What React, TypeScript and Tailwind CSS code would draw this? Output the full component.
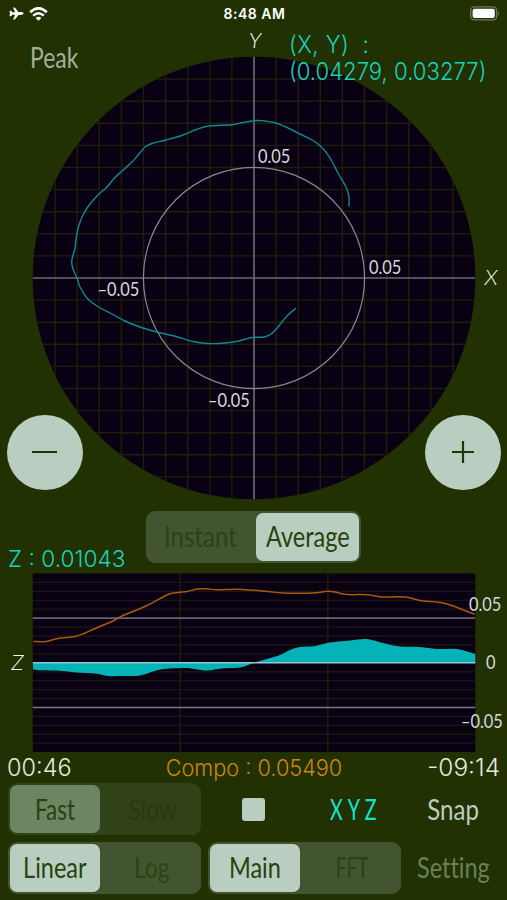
import React from "react";
import { IoAirplane } from "react-icons/io5";

type Point = [number, number];

const grid = Array.from({ length: 19 }, (_, i) => (i - 9) * 22.1);
const rows = Array.from({ length: 19 }, (_, i) => (i + 1) * 8.93);

const orbit: Point[] = [
  [349, 206], [349, 197], [346.5, 188], [338, 173], [330, 158], [322, 147.5], [313, 140.5],
  [301, 134.5], [288, 128], [276, 123], [265, 121], [256, 120.5], [243, 122.5], [232, 124.7],
  [209, 126], [196, 129.5], [183, 135], [166, 140], [152, 143.5], [145, 147], [139, 154],
  [132, 162], [122, 171], [114, 178.5], [107, 187], [98, 195], [90, 204], [84, 213], [79, 225],
  [76.5, 236], [75, 248.5], [73, 255], [71.7, 262], [73, 269], [77, 278], [80, 287], [87, 298],
  [97, 306], [110, 313], [125, 321], [140, 327], [157, 332], [176, 336.5], [193, 341.5],
  [207, 343.5], [225, 343], [239, 341], [252, 337.5], [264, 337], [271, 334], [278, 327],
  [287, 316], [295.5, 308.5],
];

const compo: Point[] = [
  [34, 641.5], [46, 641.5], [58, 638.5], [75, 636.5], [85, 633], [94, 629], [113, 621],
  [123, 615.5], [146, 606], [168, 594.5], [178, 592.5], [187, 591.5], [197, 589], [207, 588.7],
  [217, 589.7], [237, 589.2], [250, 590], [268, 591.5], [283, 593], [312, 593], [327, 591.3],
  [335, 592], [347, 594.5], [368, 594.7], [381, 597], [405, 597], [420, 600.5], [443, 603],
  [457, 607.5], [474, 614],
];

const zWave: Point[] = [
  [33, 669.5], [40, 670.3], [62, 671], [77, 672.5], [95, 673.5], [108, 676], [123, 676],
  [136, 676], [144, 674.5], [158, 670], [170, 668.5], [187, 668], [197, 669.5], [208, 670.5],
  [222, 668.5], [240, 667.5], [248, 665], [254, 662.7], [265, 659.5], [280, 655], [290, 650],
  [300, 647], [315, 646], [330, 642.5], [350, 640.5], [364, 639], [372, 640], [387, 644],
  [400, 646.5], [420, 647], [437, 649], [457, 649], [475.3, 654],
];

// Catmull-Rom through the samples
const smooth = (pts: Point[]) =>
  pts.reduce((d, [x, y], i) => {
    if (i === 0) return `M${x} ${y}`;
    const a = pts[Math.max(i - 2, 0)];
    const b = pts[i - 1];
    const c = pts[Math.min(i + 1, pts.length - 1)];
    return `${d}C${b[0] + (x - a[0]) / 6} ${b[1] + (y - a[1]) / 6} ${x - (c[0] - b[0]) / 6} ${
      y - (c[1] - b[1]) / 6
    } ${x} ${y}`;
  }, "");

interface LabelProps {
  x: number;
  y: number;
  children: string;
}

const Tick = ({ x, y, children }: LabelProps) => (
  <text
    transform={`translate(${x} ${y}) scale(0.82 1)`}
    className="fill-[#d9d8dd] font-['Lato',sans-serif] text-[20px]"
  >
    {children}
  </text>
);

const Axis = ({ x, y, children }: LabelProps) => (
  <text
    x={x}
    y={y}
    textAnchor="middle"
    className="fill-[#f0f5ee] font-['Lato',sans-serif] text-[22.5px] font-light italic"
  >
    {children}
  </text>
);

const StatusBar = () => (
  <header className="flex h-[27px] items-center justify-between pr-[7px] pl-[9px] text-white">
    <div className="flex w-[60px] items-center gap-[5px]">
      <IoAirplane size={15} />
      <svg width="19" height="14" viewBox="0 0 19 14" fill="none" stroke="currentColor">
        <path d="M1.2 5.2Q9.5 -2.4 17.8 5.2" strokeWidth="2.7" />
        <path d="M4.2 8.6Q9.5 3.8 14.8 8.6" strokeWidth="2.5" />
        <path d="M6.6 10.9Q9.5 8.4 12.4 10.9L9.5 13.8Z" fill="currentColor" stroke="none" />
      </svg>
    </div>
    <span className="font-['Inter',sans-serif] text-[14px] font-semibold tracking-[0.5px]">
      8:48 AM
    </span>
    <div className="flex w-[60px] justify-end">
      <svg width="30" height="15" viewBox="0 0 30 15">
        <rect x="0.7" y="0.9" width="26" height="13" rx="3.6" fill="none" stroke="#6f7a58" strokeWidth="1.3" />
        <rect x="2.6" y="2.8" width="22.2" height="9.2" rx="2" fill="#fff" />
        <path d="M28 5q2 2.4 0 4.8Z" fill="#6f7a58" />
      </svg>
    </div>
  </header>
);

const OrbitPlot = () => (
  <section className="relative h-[484px]">
    <svg width="507" height="484" viewBox="0 27 507 484" className="block">
      <defs>
        <clipPath id="disc">
          <circle cx="254" cy="278" r="221.3" />
        </clipPath>
      </defs>
      <g clipPath="url(#disc)">
        <rect x="32" y="56" width="444" height="444" fill="#0a0014" />
        {grid.map((g) => (
          <path
            key={g}
            d={`M${254 + g} 56V500M32 ${278 + g}H476`}
            stroke="#1f1e09"
            strokeWidth="1.4"
          />
        ))}
        <path d="M254 56V500M32 278H476" stroke="#66636f" strokeWidth="1.7" />
      </g>
      <circle cx="254" cy="278" r="110.6" fill="none" stroke="#8b8590" strokeWidth="1.2" />
      <path d={smooth(orbit)} fill="none" stroke="#0e8b92" strokeWidth="1.4" strokeLinecap="round" />
      <Tick x={258} y={163}>0.05</Tick>
      <Tick x={369} y={274}>0.05</Tick>
      <Tick x={97.5} y={296}>–0.05</Tick>
      <Tick x={208} y={407}>–0.05</Tick>
      <Axis x={255} y={48}>Y</Axis>
      <Axis x={491} y={285}>X</Axis>
    </svg>
    <button className="absolute top-[9px] left-[30px] origin-left scale-x-[0.82] font-['Lato',sans-serif] text-[28px] text-[#9fb19b]">
      Peak
    </button>
    <div className="absolute top-[4px] left-[289px] origin-left scale-x-[0.93] font-['Inter',sans-serif] text-[23.8px] leading-[27px] font-light whitespace-pre text-[#17d3bd]">
      <p className="tracking-[0.5px]">(X, Y)  :</p>
      <p>(0.04279, 0.03277)</p>
    </div>
    <button
      aria-label="Zoom out"
      className="absolute top-[387.5px] left-[7px] flex size-[75.5px] items-center justify-center rounded-full bg-[#b9cdc0]"
    >
      <span className="h-[2.4px] w-[25px] bg-[#213503]" />
    </button>
    <button
      aria-label="Zoom in"
      className="absolute top-[387.5px] left-[425.3px] flex size-[75.5px] items-center justify-center rounded-full bg-[#b9cdc0]"
    >
      <svg width="24" height="24" viewBox="0 0 24 24" stroke="#213503" strokeWidth="2.2">
        <path d="M1 12H23M12 1V23" />
      </svg>
    </button>
  </section>
);

const ZChart = () => (
  <svg width="507" height="179" viewBox="0 573 507 179" className="block">
    <rect x="32.7" y="573.5" width="442.6" height="178.5" fill="#0a0014" />
    {rows.map((r) => (
      <path key={r} d={`M32.7 ${573.5 + r}H475.3`} stroke="#1a170c" strokeWidth="1.3" />
    ))}
    <path d="M180.3 573.5V752M327.8 573.5V752" stroke="#1b1b0b" strokeWidth="1.8" />
    <path d="M32.7 618.1H475.3" stroke="#66636f" strokeWidth="1.7" />
    <path d="M32.7 707.4H475.3" stroke="#7a7580" strokeWidth="1.5" />
    <path d={`${smooth(zWave)}V662.7H33Z`} fill="#04b3b8" />
    <path d="M32.7 662.7H475.3" stroke="#8fc9cc" strokeWidth="1.4" />
    <path d={smooth(compo)} fill="none" stroke="#a9590f" strokeWidth="1.5" strokeLinecap="round" />
    <Tick x={469} y={611}>0.05</Tick>
    <Tick x={486} y={669}>0</Tick>
    <Tick x={461} y={728}>–0.05</Tick>
    <Axis x={17.5} y={670}>Z</Axis>
  </svg>
);

export default function App() {
  return (
    <main className="flex h-[900px] w-[507px] flex-col overflow-hidden bg-[#213102]">
      <StatusBar />
      <OrbitPlot />

      <div className="flex h-[62px] items-start">
        <div className="flex h-full w-[146px] items-end pl-[8px]">
          <span className="font-['Inter',sans-serif] text-[22.7px] leading-[28px] font-light whitespace-nowrap text-[#17d3bd]">
            Z : 0.01043
          </span>
        </div>
        <div className="flex h-[52px] w-[215px] rounded-[9px] bg-[#435530] p-[2px] font-['Lato',sans-serif] text-[28px]">
          <button className="flex w-[108px] items-center justify-center pb-[3px] pr-[4px] text-[#2c4212]">
            <span className="scale-x-[0.86]">Instant</span>
          </button>
          <button className="flex flex-1 items-center justify-center rounded-[7px] bg-[#b9cdc0] pb-[3px] text-[#26430d]">
            <span className="scale-x-[0.84]">Average</span>
          </button>
        </div>
      </div>

      <ZChart />

      <div className="flex h-[31px] items-center justify-between px-[7px] font-['Inter',sans-serif] text-[23.5px] font-light text-[#e3eadb]">
        <span className="w-[100px]">00:46</span>
        <span className="text-[22.6px] whitespace-nowrap text-[#cf860c]">
          <span className="inline-block scale-x-[0.96]">Compo : 0.05490</span>
        </span>
        <span className="w-[100px] origin-right scale-x-[1.04] text-right">-09:14</span>
      </div>

      <div className="flex h-[52px] items-center pl-[8px] font-['Lato',sans-serif] text-[28px]">
        <div className="flex h-[52px] w-[193px] rounded-[9px] bg-[#314219] p-[2px]">
          <button className="flex w-[90px] items-center justify-center rounded-[7px] bg-[#6e8563] pb-[1px] text-[#26430d]">
            <span className="scale-x-[0.8]">Fast</span>
          </button>
          <button className="flex flex-1 items-center justify-center pb-[1px] pl-[6px] text-[#273a0c]">
            <span className="scale-x-[0.82]">Slow</span>
          </button>
        </div>
        <div className="flex w-[105px] justify-center">
          <span className="size-[23px] rounded-[3px] bg-[#b9cdc0]" />
        </div>
        <div className="flex w-[96px] justify-center pb-[1px] pl-[4px] tracking-[7px] text-[#14e3d2]">
          <span className="scale-x-[0.7]">XYZ</span>
        </div>
        <div className="flex w-[102px] justify-center pb-[1px] text-[#b9cdc0]">
          <span className="scale-x-[0.86]">Snap</span>
        </div>
      </div>

      <div className="mt-[7px] flex h-[52px] items-center pl-[8px] font-['Lato',sans-serif] text-[28px] [font-variant-ligatures:none]">
        <div className="flex h-[52px] w-[193px] rounded-[9px] bg-[#435530] p-[2px]">
          <button className="flex w-[90px] items-center justify-center rounded-[7px] bg-[#b9cdc0] pb-[2px] text-[#26430d]">
            <span className="scale-x-[0.84]">Linear</span>
          </button>
          <button className="flex flex-1 items-center justify-center pb-[2px] pl-[5px] text-[#2c4212]">
            <span className="scale-x-[0.8]">Log</span>
          </button>
        </div>
        <div className="ml-[7px] flex h-[52px] w-[193px] rounded-[9px] bg-[#435530] p-[2px]">
          <button className="flex w-[90px] items-center justify-center rounded-[7px] bg-[#b9cdc0] pb-[2px] text-[#26430d]">
            <span className="scale-x-[0.84]">Main</span>
          </button>
          <button className="flex flex-1 items-center justify-center pb-[2px] pl-[5px] text-[#2c4212]">
            <span className="scale-x-[0.68]">FFT</span>
          </button>
        </div>
        <div className="flex w-[104px] justify-center pb-[2px] text-[#6b8059]">
          <span className="scale-x-[0.84]">Setting</span>
        </div>
      </div>
    </main>
  );
}
